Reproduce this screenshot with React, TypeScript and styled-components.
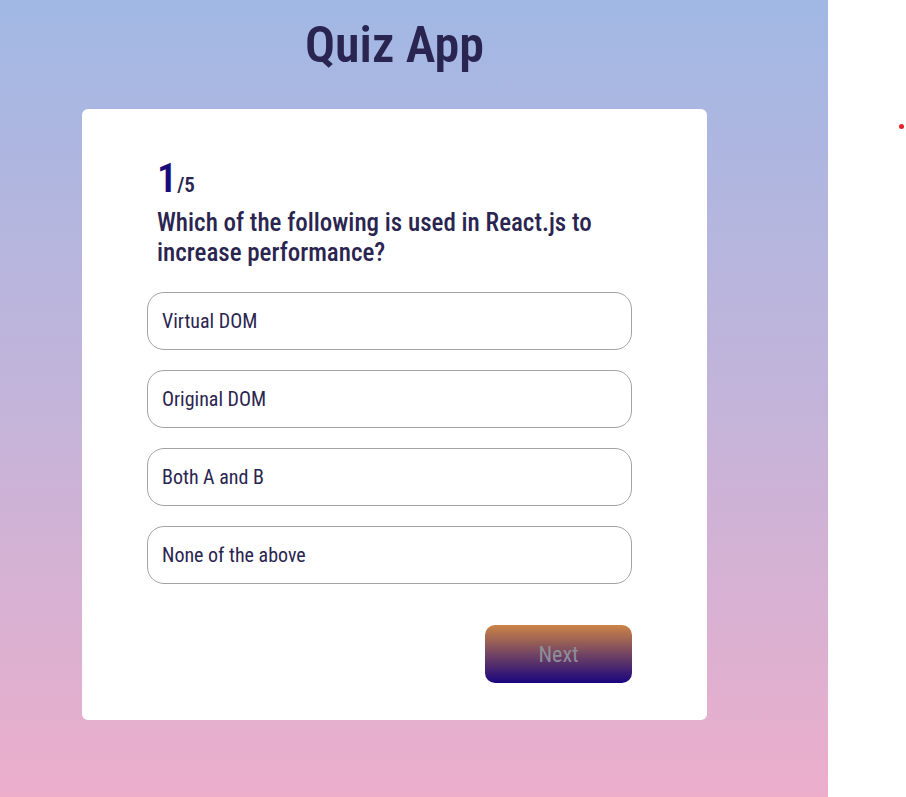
import React from "react";
import styled, { createGlobalStyle } from "styled-components";

const Global = createGlobalStyle`
  html, body { margin: 0; padding: 0; }
  body { font-family: Roboto, "Liberation Sans", sans-serif; font-stretch: condensed; background: #fff; }
  * { box-sizing: border-box; }
`;

const Page = styled.div`
  display: flex;
  width: 906px;
  height: 797px;
  overflow: hidden;
`;

const Main = styled.main`
  width: 828px;
  height: 797px;
  background: linear-gradient(180deg, #a1b8e4 0%, #c3b4da 50%, #ecaecb 100%);
  display: flex;
  flex-direction: column;
  align-items: flex-start;
  padding-left: 82px;
`;

const Column = styled.div`
  width: 625px;
  display: flex;
  flex-direction: column;
  align-items: center;
`;

const Title = styled.h1`
  margin: 14px 0 0;
  height: 95px;
  font-size: 50px;
  font-weight: 600;
  color: #2a2550;
  line-height: 62px;
`;

const Card = styled.section`
  width: 625px;
  height: 611px;
  background: #fff;
  border-radius: 6px;
  padding: 46px 75px 0 65px;
  display: flex;
  flex-direction: column;
`;

const Header = styled.div`
  padding-left: 10px;
  color: #2a2550;
`;

const Count = styled.div`
  display: flex;
  align-items: baseline;
  height: 44px;
`;

const Current = styled.span`
  font-size: 40px;
  font-weight: 600;
  color: #1a0b7a;
`;

const Total = styled.span`
  font-size: 21px;
  font-weight: 600;
  color: #2a2550;
`;

const Question = styled.h2`
  margin: 9px 0 0;
  font-size: 25px;
  font-weight: 500;
  line-height: 30px;
  color: #2a2550;
`;

const Options = styled.div`
  margin-top: 24px;
  display: flex;
  flex-direction: column;
  gap: 20px;
`;

const Option = styled.button`
  width: 485px;
  height: 58px;
  border: 1px solid #a3a3a3;
  border-radius: 17px;
  background: #fff;
  text-align: left;
  padding: 0 14px;
  font-family: inherit;
  font-stretch: condensed;
  font-size: 20px;
  color: #2a2550;
`;

const Footer = styled.div`
  margin-top: 41px;
  width: 485px;
  display: flex;
  justify-content: flex-end;
`;

const NextButton = styled.button`
  width: 147px;
  height: 58px;
  border: none;
  border-radius: 10px;
  background: linear-gradient(180deg, #cc8446 0%, #1a057e 100%);
  color: #8e8e98;
  font-family: inherit;
  font-stretch: condensed;
  font-size: 22px;
`;

const Aside = styled.aside`
  flex: 1;
  position: relative;
`;

const Dot = styled.span`
  position: absolute;
  left: 71px;
  top: 124px;
  width: 5px;
  height: 5px;
  border-radius: 50%;
  background: #e41f28;
`;

const options = ["Virtual DOM", "Original DOM", "Both A and B", "None of the above"];

export default function App() {
  return (
    <>
      <Global />
      <Page>
        <Main>
          <Column>
            <Title>Quiz App</Title>
            <Card>
              <Header>
                <Count>
                  <Current>1</Current>
                  <Total>/5</Total>
                </Count>
                <Question>
                  Which of the following is used in React.js to
                  <br />
                  increase performance?
                </Question>
              </Header>
              <Options>
                {options.map((o) => (
                  <Option key={o}>{o}</Option>
                ))}
              </Options>
              <Footer>
                <NextButton>Next</NextButton>
              </Footer>
            </Card>
          </Column>
        </Main>
        <Aside>
          <Dot />
        </Aside>
      </Page>
    </>
  );
}
